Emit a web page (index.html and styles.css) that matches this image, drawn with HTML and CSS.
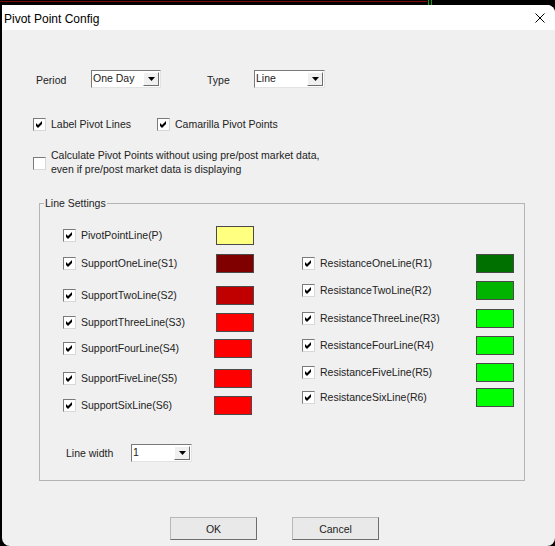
FILE: index.html
```html
<!DOCTYPE html>
<html lang="en">
<head>
  <meta charset="UTF-8">
  <meta name="viewport" content="width=device-width, initial-scale=1.0">
  <title>Pivot Point Config</title>
  <link rel="stylesheet" href="styles.css">
</head>
<body>
  <!-- chart behind the dialog -->
  <div class="chart-strip">
    <div class="chart-line"></div>
    <div class="chart-tick"></div>
    <div class="chart-tick second"></div>
  </div>

  <div class="dialog">
    <div class="titlebar">
      <span class="title">Pivot Point Config</span>
      <svg class="close" width="10" height="10" viewBox="0 0 10 10">
        <path d="M0.5 0.5 L9.5 9.5 M9.5 0.5 L0.5 9.5" stroke="#000" stroke-width="1" fill="none"/>
      </svg>
    </div>

    <div class="dialog-body">
      <div class="top-row">
        <span class="field-label period-label">Period</span>
        <div class="select period-select">
          <span class="select-value">One Day</span>
          <span class="select-btn"><svg width="7" height="4" viewBox="0 0 7 4"><polygon points="0,0 7,0 3.5,4" fill="#000"/></svg></span>
        </div>
        <span class="field-label type-label">Type</span>
        <div class="select type-select">
          <span class="select-value">Line</span>
          <span class="select-btn"><svg width="7" height="4" viewBox="0 0 7 4"><polygon points="0,0 7,0 3.5,4" fill="#000"/></svg></span>
        </div>
      </div>

      <div class="option-row">
        <label class="option option-wide">
          <span class="cb"><svg width="11" height="11" viewBox="0 0 11 11"><polygon points="2,4 4,6 8,2 8,5 4,9 2,7" fill="#000"/></svg></span>
          <span class="option-text">Label Pivot Lines</span>
        </label>
        <label class="option">
          <span class="cb"><svg width="11" height="11" viewBox="0 0 11 11"><polygon points="2,4 4,6 8,2 8,5 4,9 2,7" fill="#000"/></svg></span>
          <span class="option-text">Camarilla Pivot Points</span>
        </label>
      </div>

      <label class="calc-row">
        <span class="cb"></span>
        <span class="option-text">Calculate Pivot Points without using pre/post market data,<br>even if pre/post market data is displaying</span>
      </label>

      <div class="group">
        <div class="group-title">Line Settings</div>
        <div class="columns">
          <div class="col-left">
            <div class="line-row">
              <span class="cb"><svg width="11" height="11" viewBox="0 0 11 11"><polygon points="2,4 4,6 8,2 8,5 4,9 2,7" fill="#000"/></svg></span>
              <span class="option-text">PivotPointLine(P)</span>
              <span class="swatch" style="background:#ffff80"></span>
            </div>
            <div class="line-row gap-9">
              <span class="cb"><svg width="11" height="11" viewBox="0 0 11 11"><polygon points="2,4 4,6 8,2 8,5 4,9 2,7" fill="#000"/></svg></span>
              <span class="option-text">SupportOneLine(S1)</span>
              <span class="swatch" style="background:#800000"></span>
            </div>
            <div class="line-row gap-13">
              <span class="cb"><svg width="11" height="11" viewBox="0 0 11 11"><polygon points="2,4 4,6 8,2 8,5 4,9 2,7" fill="#000"/></svg></span>
              <span class="option-text">SupportTwoLine(S2)</span>
              <span class="swatch" style="background:#c00000"></span>
            </div>
            <div class="line-row gap-8">
              <span class="cb"><svg width="11" height="11" viewBox="0 0 11 11"><polygon points="2,4 4,6 8,2 8,5 4,9 2,7" fill="#000"/></svg></span>
              <span class="option-text">SupportThreeLine(S3)</span>
              <span class="swatch" style="background:#ff0000"></span>
            </div>
            <div class="line-row gap-7">
              <span class="cb"><svg width="11" height="11" viewBox="0 0 11 11"><polygon points="2,4 4,6 8,2 8,5 4,9 2,7" fill="#000"/></svg></span>
              <span class="option-text">SupportFourLine(S4)</span>
              <span class="swatch inset" style="background:#ff0000"></span>
            </div>
            <div class="line-row gap-11">
              <span class="cb"><svg width="11" height="11" viewBox="0 0 11 11"><polygon points="2,4 4,6 8,2 8,5 4,9 2,7" fill="#000"/></svg></span>
              <span class="option-text">SupportFiveLine(S5)</span>
              <span class="swatch inset" style="background:#ff0000"></span>
            </div>
            <div class="line-row gap-8">
              <span class="cb"><svg width="11" height="11" viewBox="0 0 11 11"><polygon points="2,4 4,6 8,2 8,5 4,9 2,7" fill="#000"/></svg></span>
              <span class="option-text">SupportSixLine(S6)</span>
              <span class="swatch inset" style="background:#ff0000"></span>
            </div>
          </div>

          <div class="col-right">
            <div class="line-row">
              <span class="cb"><svg width="11" height="11" viewBox="0 0 11 11"><polygon points="2,4 4,6 8,2 8,5 4,9 2,7" fill="#000"/></svg></span>
              <span class="option-text">ResistanceOneLine(R1)</span>
              <span class="swatch" style="background:#007000"></span>
            </div>
            <div class="line-row gap-8">
              <span class="cb"><svg width="11" height="11" viewBox="0 0 11 11"><polygon points="2,4 4,6 8,2 8,5 4,9 2,7" fill="#000"/></svg></span>
              <span class="option-text">ResistanceTwoLine(R2)</span>
              <span class="swatch" style="background:#00b400"></span>
            </div>
            <div class="line-row gap-9">
              <span class="cb"><svg width="11" height="11" viewBox="0 0 11 11"><polygon points="2,4 4,6 8,2 8,5 4,9 2,7" fill="#000"/></svg></span>
              <span class="option-text">ResistanceThreeLine(R3)</span>
              <span class="swatch" style="background:#00ff00"></span>
            </div>
            <div class="line-row gap-8">
              <span class="cb"><svg width="11" height="11" viewBox="0 0 11 11"><polygon points="2,4 4,6 8,2 8,5 4,9 2,7" fill="#000"/></svg></span>
              <span class="option-text">ResistanceFourLine(R4)</span>
              <span class="swatch" style="background:#00ff00"></span>
            </div>
            <div class="line-row gap-8">
              <span class="cb"><svg width="11" height="11" viewBox="0 0 11 11"><polygon points="2,4 4,6 8,2 8,5 4,9 2,7" fill="#000"/></svg></span>
              <span class="option-text">ResistanceFiveLine(R5)</span>
              <span class="swatch" style="background:#00ff00"></span>
            </div>
            <div class="line-row gap-6">
              <span class="cb"><svg width="11" height="11" viewBox="0 0 11 11"><polygon points="2,4 4,6 8,2 8,5 4,9 2,7" fill="#000"/></svg></span>
              <span class="option-text">ResistanceSixLine(R6)</span>
              <span class="swatch" style="background:#00ff00"></span>
            </div>
          </div>
        </div>

        <div class="width-row">
          <span class="width-label">Line width</span>
          <div class="select width-select">
            <span class="select-value">1</span>
            <span class="select-btn"><svg width="7" height="4" viewBox="0 0 7 4"><polygon points="0,0 7,0 3.5,4" fill="#000"/></svg></span>
          </div>
        </div>
      </div>

      <div class="button-row">
        <button class="btn">OK</button>
        <button class="btn">Cancel</button>
      </div>
    </div>
  </div>
</body>
</html>
```

FILE: styles.css
```css
* {
  box-sizing: border-box;
}

body {
  margin: 0;
  width: 555px;
  height: 546px;
  overflow: hidden;
  background-color: #000;
  font-family: "Liberation Sans", Arial, sans-serif;
  font-size: 10.5px;
  color: #222;
}

/* chart bits peeking above the dialog */
.chart-strip {
  display: flex;
  height: 5px;
}

.chart-line {
  width: 427px;
  height: 1px;
  margin-top: 1px;
  background-color: #7a0a0a;
}

.chart-tick {
  width: 1px;
  height: 5px;
  margin-left: 1px;
  background-color: #12a012;
}

.chart-tick.second {
  margin-left: 2px;
}

.dialog {
  margin-left: 2px;
  width: 553px;
  height: 541px;
  background-color: #f0f0f0;
  border-radius: 0 8px 8px 8px;
  overflow: hidden;
}

.titlebar {
  display: flex;
  align-items: flex-start;
  height: 25px;
  background-color: #fff;
}

.title {
  margin: 7px 0 0 2px;
  font-size: 12px;
  line-height: 14px;
  color: #000;
}

.close {
  margin: 8px 10px 0 auto;
}

.top-row {
  display: flex;
  align-items: flex-start;
  margin: 40px 0 0 34px;
}

.field-label {
  padding-top: 3px;
  line-height: 14px;
}

.period-label {
  width: 55px;
}

.type-label {
  width: 47px;
  margin-left: 46px;
}

.select {
  display: flex;
  height: 18px;
  background-color: #fff;
  border: 1px solid;
  border-color: #7a7a7a #e3e3e3 #e3e3e3 #7a7a7a;
}

.period-select {
  width: 70px;
}

.type-select {
  width: 71px;
}

.width-select {
  width: 61px;
}

.select-value {
  flex: 1;
  padding-left: 1px;
  line-height: 14px;
}

.select-btn {
  display: flex;
  align-items: center;
  justify-content: center;
  width: 16px;
  margin: 1px;
  background-color: #f0f0f0;
  border: 1px solid;
  border-color: #fff #6d6d6d #6d6d6d #fff;
}

.option-row {
  display: flex;
  align-items: center;
  margin: 30px 0 0 31px;
}

.option {
  display: flex;
  align-items: center;
}

.option-wide {
  width: 124px;
}

.cb {
  display: flex;
  flex: none;
  width: 13px;
  height: 13px;
  background-color: #fff;
  border: 1px solid;
  border-color: #7a7a7a #d8d8d8 #d8d8d8 #7a7a7a;
}

.option-text {
  margin-left: 5px;
  line-height: 13px;
}

.calc-row {
  display: flex;
  align-items: flex-start;
  margin: 17px 0 0 31px;
}

.calc-row .cb {
  margin-top: 9px;
}

.calc-row .option-text {
  line-height: 14px;
}

.group {
  margin: 27px 0 0 37px;
  width: 486px;
  height: 278px;
  border: 1px solid #b4b4b4;
}

.group-title {
  width: max-content;
  margin: -7px 0 0 4px;
  padding: 0 1px;
  line-height: 13px;
  background-color: #f0f0f0;
}

.columns {
  display: flex;
  align-items: flex-start;
}

.col-left {
  width: 191px;
  margin-left: 23px;
  padding-top: 16px;
}

.col-right {
  width: 212px;
  margin-left: 48px;
  padding-top: 44px;
}

.line-row {
  display: flex;
  align-items: center;
  height: 19px;
}

.gap-6 { margin-top: 6px; }
.gap-7 { margin-top: 7px; }
.gap-8 { margin-top: 8px; }
.gap-9 { margin-top: 9px; }
.gap-11 { margin-top: 11px; }
.gap-13 { margin-top: 13px; }

.swatch {
  width: 38px;
  height: 19px;
  margin-left: auto;
  border: 1px solid #4a4a4a;
}

.swatch.inset {
  margin-right: 2px;
}

.width-row {
  display: flex;
  align-items: center;
  margin: 29px 0 0 26px;
}

.width-label {
  width: 65px;
}

.button-row {
  display: flex;
  margin: 36px 0 0 168px;
}

.btn {
  width: 87px;
  height: 23px;
  padding: 0;
  font: inherit;
  color: #222;
  background-color: #e9e9e9;
  border: 1px solid;
  border-color: #b8b8b8 #6e6e6e #6e6e6e #b8b8b8;
}

.btn + .btn {
  margin-left: 35px;
}
```
